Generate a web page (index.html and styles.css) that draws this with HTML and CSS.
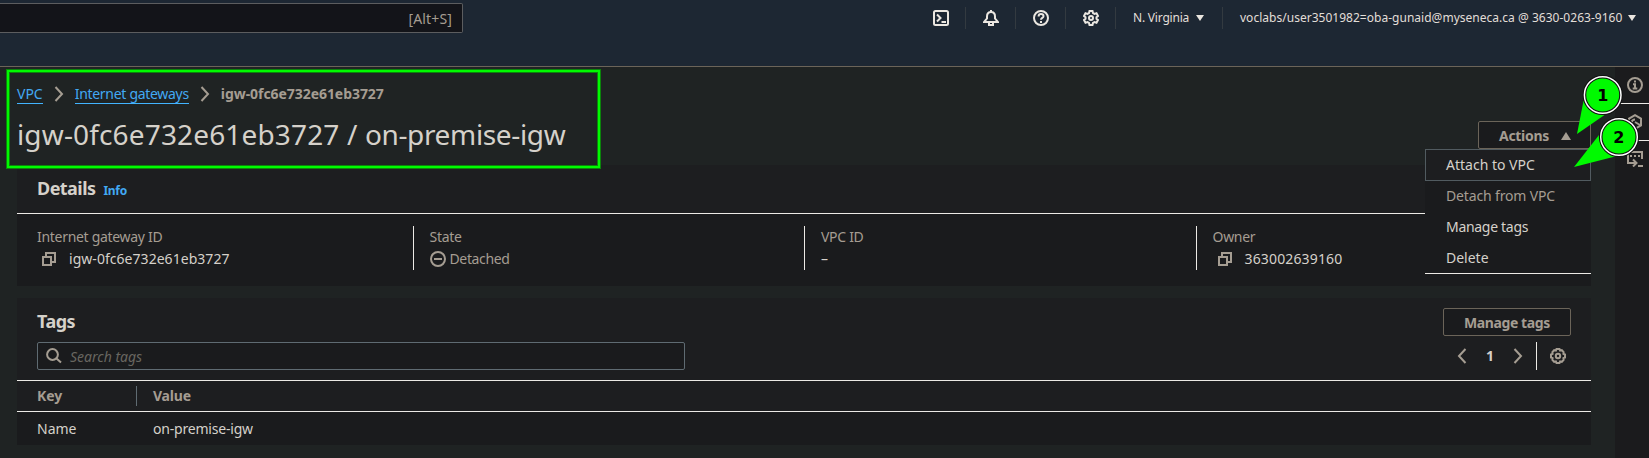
FILE: index.html
```
<!DOCTYPE html>
<html lang="en">
<head>
<meta charset="utf-8">
<title>Internet gateway</title>
<link rel="stylesheet" href="styles.css">
</head>
<body>
<header class="topbar">
  <div class="search"><span>[Alt+S]</span></div>
  <nav class="tools">
    <span class="tool"><svg width="16" height="16" viewBox="0 0 16 16"><rect x="1" y="1" width="14" height="14" rx="1.5"/><path d="M4 4.5 7.5 8 4 11.5M8.5 12H13"/></svg></span>
    <span class="tool"><svg width="16" height="16" viewBox="0 0 16 16"><path d="M1 12h14L12 8.5V6.500C12 3.800 10.500 2 8 2S4 3.800 4 6.500V8.500zM8 2V0M6 12.500V15h4v-2.500"/></svg></span>
    <span class="tool"><svg width="16" height="16" viewBox="0 0 16 16"><circle cx="8" cy="8" r="7"/><path d="M5.600 6.400C5.600 4.700 6.600 4 8 4s2.500.8 2.500 2.200C10.500 7.900 8 7.900 8 9.800M8 11v2"/></svg></span>
    <span class="tool"><svg width="16" height="16" viewBox="0 0 16 16"><path d="M6.500 1h3l.5 2 1.500.9 2-.6L15 6l-1.500 1.200v1.600L15 10l-1.500 2.700-2-.6-1.500.9-.5 2h-3L6 13l-1.500-.9-2 .6L1 10l1.500-1.200V7.200L1 6l1.500-2.700 2 .6L6 3z"/><circle cx="8" cy="8" r="2"/></svg></span>
    <span class="account region">N. Virginia<i class="caret"></i></span>
    <span class="account user">voclabs/user3501982=oba-gunaid@myseneca.ca @ 3630-0263-9160<i class="caret"></i></span>
  </nav>
</header>
<div class="layout">
  <main class="main">
    <nav class="crumbs">
      <a>VPC</a>
      <svg width="10" height="16" viewBox="0 0 10 16"><path d="m1.500 1 6.500 7-6.500 7"/></svg>
      <a class="crumb-link">Internet gateways</a>
      <svg width="10" height="16" viewBox="0 0 10 16"><path d="m1.500 1 6.500 7-6.500 7"/></svg>
      <b>igw-0fc6e732e61eb3727</b>
    </nav>
    <div class="title-row">
      <h1><span class="gateway">igw-0fc6e732e61eb3727 / </span><span class="name">on-premise-igw</span></h1>
      <div class="actions">
        <button class="btn">Actions<i class="caret up"></i></button>
        <ul class="menu">
          <li class="active">Attach to VPC</li>
          <li class="disabled">Detach from VPC</li>
          <li class="manage-item">Manage tags</li>
          <li>Delete</li>
        </ul>
      </div>
    </div>
    <section class="panel details">
      <div class="panel-head"><h2>Details</h2><a class="info">Info</a></div>
      <dl class="fields">
        <div><dt>Internet gateway ID</dt><dd><svg class="copy" width="14" height="14" viewBox="0 0 14 14"><path d="M1 5h8v8H1zM4 5V1h9v9H9"/></svg><span class="gateway-id">igw-0fc6e732e61eb3727</span></dd></div>
        <div><dt>State</dt><dd class="muted"><svg class="state" width="16" height="16" viewBox="0 0 16 16"><circle cx="8" cy="8" r="7"/><path d="M4 8h8"/></svg>Detached</dd></div>
        <div><dt>VPC ID</dt><dd>–</dd></div>
        <div><dt>Owner</dt><dd><svg class="copy" width="14" height="14" viewBox="0 0 14 14"><path d="M1 5h8v8H1zM4 5V1h9v9H9"/></svg><span class="owner">363002639160</span></dd></div>
      </dl>
    </section>
    <section class="panel tags">
      <div class="tags-head">
        <div class="tags-left">
          <h2>Tags</h2>
          <div class="filter"><svg width="16" height="16" viewBox="0 0 16 16"><circle cx="6.500" cy="6.500" r="5.400"/><path d="m10.500 10.500 4.500 4"/></svg>Search tags</div>
        </div>
        <div class="tags-right">
          <button class="btn manage">Manage tags</button>
          <div class="pager">
            <svg width="10" height="16" viewBox="0 0 10 16"><path d="m8.500 1-6.500 7 6.500 7"/></svg>
            <b>1</b>
            <svg width="10" height="16" viewBox="0 0 10 16"><path d="m1.500 1 6.500 7-6.500 7"/></svg>
            <span class="prefs"><svg width="16" height="16" viewBox="0 0 16 16"><path d="M6.500 1h3l.6 1.500 1.700-.3 1.800 1.800-.2 1.800L15 6.500v3l-1.600.6.2 1.900-1.800 1.800-1.700-.3L9.500 15h-3l-.6-1.500-1.700.3L2.400 12l.2-1.900L1 9.500v-3l1.600-.7L2.400 4l1.800-1.800 1.700.3z"/><circle cx="8" cy="8" r="2.200"/></svg></span>
          </div>
        </div>
      </div>
      <div class="row head"><span>Key</span><span>Value</span></div>
      <div class="row"><span>Name</span><span>on-premise-igw</span></div>
    </section>
  </main>
  <aside class="rail">
    <span><svg width="16" height="16" viewBox="0 0 16 16"><circle cx="8" cy="8" r="7"/><path d="M8 3.500v2M6 7.300h2V11M5.700 11.500h4.600"/></svg></span>
    <span><svg width="16" height="16" viewBox="0 0 16 16"><path d="M8 1.200l6 3.400v6.800L8 14.800l-6-3.400V4.600zM4.500 8.500C5 6.500 6.300 5.500 8 5.500M8 8l5 3"/></svg></span>
    <span><svg width="16" height="16" viewBox="0 0 16 16"><path d="M1 9V1h14v7M3 5h2M7 5h2M11 5h2M1 9v3h8M6 8.500 9.500 12 6 15.500M11 15h5"/></svg></span>
  </aside>
</div>
<div class="highlight"></div>
<svg class="markers" width="90" height="110" viewBox="1559 68 90 110">
  <path class="tail" d="M1577 134l6.500-33 21 14z"/>
  <circle class="ring" cx="1602.700" cy="95" r="18.300"/><circle class="disc" cx="1602.700" cy="95" r="18.300"/>
  <text x="1602.700" y="100.500">1</text>
  <path class="tail" d="M1574 167l25-32 18 21z"/>
  <circle class="ring" cx="1619" cy="137" r="18.300"/><circle class="disc" cx="1619" cy="137" r="18.300"/>
  <text x="1618.700" y="142.500">2</text>
</svg>
</body>
</html>
```
FILE: styles.css
```
* { box-sizing: border-box; }
body {
  margin: 0;
  height: 458px;
  overflow: hidden;
  display: flex;
  flex-direction: column;
  background: #1f2323;
  color: #d5d1ca;
  font: 14px/20px "Noto Sans", "Open Sans", sans-serif;
}
h1, h2, dl, dd, ul { margin: 0; padding: 0; }
svg { fill: none; stroke: #a59d92; stroke-width: 2; flex: none; display: block; }

.topbar {
  height: 67px;
  flex: none;
  display: flex;
  justify-content: space-between;
  align-items: flex-start;
  padding-top: 3px;
  background: #1d2733;
  border-bottom: 1px solid #6b6459;
}
.search {
  width: 463px;
  height: 30px;
  padding: 5px 10px 0 0;
  text-align: right;
  background: #131419;
  border: 1px solid #5c5d5f;
  border-left: 0;
  border-radius: 0 2px 2px 0;
  color: #a59d92;
  letter-spacing: .15px;
}
.tools { display: flex; padding-top: 4px; color: #e2ded8; font-size: 12px; line-height: 22px; }
.tools svg { stroke: #ebe7e1; }
.tool { width: 50px; height: 22px; display: grid; place-items: center; border-right: 1px solid #333a40; }
.account { display: flex; align-items: center; }
.region { width: 107px; padding-left: 17px; border-right: 1px solid #333a40; letter-spacing: -.2px; }
.user { width: 426px; padding-left: 17px; letter-spacing: .02px; }
.caret { border: 4.500px solid transparent; border-top: 6.500px solid #e9e5df; border-bottom: 0; margin-left: 6px; }
.region .caret { margin-left: 7px; }
.up { border-top: 0; border-bottom: 8px solid #a59d92; border-left-width: 5px; border-right-width: 5px; margin-left: 12px; }

.layout { flex: 1; display: flex; min-height: 0; }
.main { flex: 1; padding: 17px 24px 0 17px; }
.crumbs { display: flex; align-items: center; height: 20px; gap: 11px; color: #a59d92; }
.crumbs a { color: #42a9f3; border-bottom: 1px solid #42b4ff; height: 20px; }
.crumbs svg { margin-top: -1px; }
.crumbs b { letter-spacing: -.06px; }
.crumb-link { letter-spacing: -.3px; }
.title-row { display: flex; justify-content: space-between; height: 61px; padding-top: 12px; }
h1 { font-size: 28px; line-height: 36px; font-weight: 400; white-space: pre; }
.gateway { letter-spacing: .15px; }
.name { letter-spacing: -.35px; }
.actions { position: relative; padding-top: 5px; }
.btn {
  display: flex;
  align-items: center;
  height: 28px;
  width: 113px;
  padding: 1px 0 0 20px;
  background: #1a1b1d;
  border: 1px solid #6b6459;
  border-radius: 2px;
  color: #a59d92;
  font: 700 14px/20px "Noto Sans", sans-serif;
  letter-spacing: -.3px;
}
.menu {
  position: absolute;
  z-index: 2;
  top: 33px;
  right: 0;
  width: 166px;
  height: 125px;
  list-style: none;
  background: #1a1b1d;
  border-bottom: 1px solid #eceae6;
}
.menu li { height: 31px; padding: 5px 21px; }
.menu .active { height: 32px; padding-left: 20px; border: 1px solid #515b60; background: #1d1e20; }
.menu .disabled { color: #a59d92; letter-spacing: -.15px; }
.menu .manage-item { letter-spacing: -.3px; }

.panel { background: #1a1b1d; }
.panel-head {
  display: flex;
  align-items: baseline;
  gap: 8px;
  height: 49px;
  padding: 11px 20px 0;
  background: #1d1e20;
  border-bottom: 1px solid #eceae6;
}
h2 { font-size: 18px; line-height: 24px; letter-spacing: -.55px; }
.info { color: #42a9f3; font-weight: 700; font-size: 12px; letter-spacing: -.3px; }
.details { height: 121px; }
.fields { display: grid; grid-template-columns: repeat(4, 1fr); padding: 12px 4px 0 4px; }
.fields > div { height: 44px; padding: 1px 0 0 16px; border-left: 1px solid #eceae6; }
.fields > div:first-child { border-color: transparent; padding-left: 15px; }
dt { color: #a59d92; letter-spacing: -.3px; height: 22px; }
dd { display: flex; height: 20px; }
.copy { margin: 3px 13px 0 5px; }
.state { margin: 2px 4px 0 0; }
.gateway-id { letter-spacing: .04px; }
.owner { letter-spacing: .15px; }
.muted { color: #a59d92; letter-spacing: -.35px; }

.tags { margin-top: 12px; height: 147px; }
.tags-head {
  display: flex;
  justify-content: space-between;
  height: 83px;
  padding: 10px 20px 0;
  background: #1d1e20;
  border-bottom: 1px solid #eceae6;
}
.tags-left h2 { height: 34px; padding-top: 1px; }
.filter {
  display: flex;
  align-items: center;
  gap: 8px;
  width: 648px;
  height: 28px;
  padding: 1px 8px 0;
  background: #1a1b1d;
  border: 1px solid #5f6b72;
  border-radius: 2px;
  color: #686660;
  font-style: italic;
}
.filter svg { margin-top: -2px; }
.tags-right { display: flex; flex-direction: column; align-items: flex-end; gap: 6px; }
.manage { width: 128px; padding-left: 20px; letter-spacing: -.4px; }
.pager { display: flex; align-items: center; height: 28px; }
.pager b { width: 46px; text-align: center; color: #d5d1ca; }
.prefs { margin-left: 13px; height: 28px; padding: 0 5px 0 13px; border-left: 1px solid #eceae6; display: flex; align-items: center; }
.row { display: grid; grid-template-columns: 99px 1fr; height: 32px; padding: 7px 20px 0; }
.row span + span { padding-left: 16px; border-left: 1px solid transparent; letter-spacing: -.2px; }
.head { height: 31px; padding-top: 5px; background: #1d1e20; border-bottom: 1px solid #eceae6; color: #a59d92; font-weight: 700; }
.head span + span { border-color: #5f6b72; height: 20px; }

.rail { width: 34px; flex: none; background: #1b1b1d; }
.rail span { display: grid; justify-content: center; padding: 10px 0 0 6px; height: 37px; border-bottom: 1px solid #eceae6; }
.rail span:last-child { border: 0; }

.highlight {
  position: absolute;
  left: 6px;
  top: 69px;
  width: 595px;
  height: 100px;
  border: 1px solid #0b840b;
  box-shadow: inset 0 0 0 2px #00fa00, inset 0 0 0 3px #0b840b;
}
.markers { position: absolute; left: 1559px; top: 68px; z-index: 3; }
.tail { fill: #00fa00; stroke: none; }
.ring { fill: #00fa00; stroke: #111; stroke-width: 3.600; }
.disc { stroke: #fff; stroke-width: 1.500; }
.markers text { font: bold 16px "DejaVu Sans", sans-serif; fill: #000; stroke: none; text-anchor: middle; }
```
